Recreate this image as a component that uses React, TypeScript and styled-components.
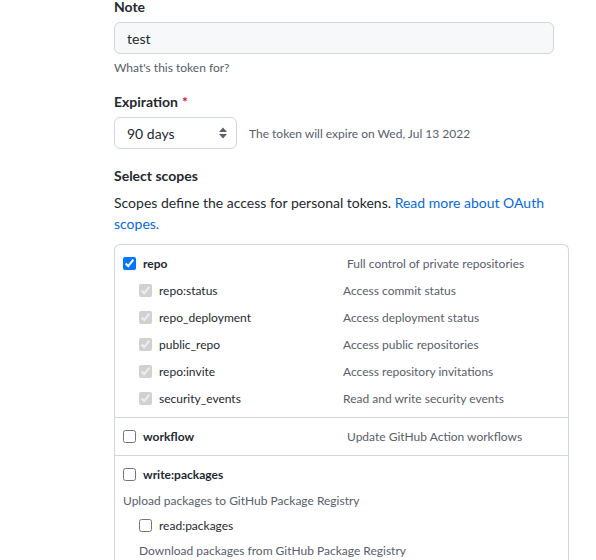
import React from "react";
import styled, { createGlobalStyle } from "styled-components";

const Global = createGlobalStyle`
  html, body { margin: 0; padding: 0; background: #fff; }
  body {
    font-family: Lato, "Noto Sans", sans-serif;
    color: #24292f;
    font-size: 14px;
  }
  * { box-sizing: border-box; }
`;

const Page = styled.div`
  padding-left: 114px;
  width: 569px;
  margin-top: -4px;
  display: flex;
  flex-direction: column;
`;

const Label = styled.label<{ $mt?: number }>`
  display: block;
  font-weight: 700;
  font-size: 14px;
  line-height: 21px;
  margin-top: ${(p) => p.$mt ?? 0}px;
`;

const Required = styled.span`
  color: #cf222e;
  margin-left: 4px;
`;

const TextInput = styled.input`
  margin-top: 5px;
  width: 440px;
  height: 32px;
  padding: 5px 12px;
  font: inherit;
  font-size: 14px;
  color: #24292f;
  background: #f6f8fa;
  border: 1px solid #d0d7de;
  border-radius: 6px;
  outline: none;
`;

const Hint = styled.p`
  margin: 5px 0 0;
  font-size: 12px;
  line-height: 18px;
  color: #57606a;
`;

const ExpRow = styled.div`
  margin-top: 5px;
  display: flex;
  align-items: center;
  gap: 12px;
`;

const SelectBox = styled.div`
  width: 123px;
  height: 32px;
  border: 1px solid #d0d7de;
  border-radius: 6px;
  background: #fff;
  display: flex;
  align-items: center;
  justify-content: space-between;
  padding: 0 8px 0 12px;
  font-size: 14px;
`;

const ExpNote = styled.span`
  font-size: 12px;
  color: #57606a;
`;

const Lead = styled.p`
  margin: 6px 0 0;
  font-size: 14px;
  line-height: 21px;
  width: 440px;
`;

const Link = styled.a`
  color: #0969da;
  text-decoration: none;
`;

const ScopeBox = styled.div`
  margin-top: 10px;
  width: 455px;
  border: 1px solid #d0d7de;
  border-radius: 6px;
  border-bottom: none;
  border-bottom-left-radius: 0;
  border-bottom-right-radius: 0;
`;

const Section = styled.div<{ $pt: number; $pb: number }>`
  padding: ${(p) => p.$pt}px 8px ${(p) => p.$pb}px 8px;
  & + & {
    border-top: 1px solid #d0d7de;
  }
`;

const Row = styled.div<{ $indent?: boolean; $h?: number }>`
  display: flex;
  align-items: center;
  height: ${(p) => p.$h ?? 27}px;
  padding-left: ${(p) => (p.$indent ? 16 : 0)}px;
`;

const Name = styled.label<{ $w: number; $bold?: boolean }>`
  display: flex;
  align-items: center;
  gap: 7px;
  width: ${(p) => p.$w}px;
  font-size: 12px;
  font-weight: ${(p) => (p.$bold ? 700 : 400)};
  color: #24292f;
`;

const Check = styled.input`
  margin: 0;
  width: 13px;
  height: 13px;
`;

const Desc = styled.span`
  font-size: 12px;
  color: #57606a;
`;

const SubDesc = styled.div<{ $indent?: boolean; $h: number }>`
  font-size: 12px;
  color: #57606a;
  line-height: ${(p) => p.$h}px;
  padding-left: ${(p) => (p.$indent ? 16 : 0)}px;
`;

const Arrows = () => (
  <svg width="10" height="14" viewBox="0 0 10 14">
    <path d="M5 1.5 L9 6 H1 Z" fill="#57606a" />
    <path d="M5 12.5 L9 8 H1 Z" fill="#57606a" />
  </svg>
);

const subs: [string, string][] = [
  ["repo:status", "Access commit status"],
  ["repo_deployment", "Access deployment status"],
  ["public_repo", "Access public repositories"],
  ["repo:invite", "Access repository invitations"],
  ["security_events", "Read and write security events"],
];

export default function App() {
  return (
    <>
      <Global />
      <Page>
        <Label>Note</Label>
        <TextInput defaultValue="test" />
        <Hint>What's this token for?</Hint>

        <Label $mt={14}>
          Expiration<Required>*</Required>
        </Label>
        <ExpRow>
          <SelectBox>
            <span>90 days</span>
            <Arrows />
          </SelectBox>
          <ExpNote>The token will expire on Wed, Jul 13 2022</ExpNote>
        </ExpRow>

        <Label $mt={16}>Select scopes</Label>
        <Lead>
          Scopes define the access for personal tokens.{" "}
          <Link href="#">Read more about OAuth scopes.</Link>
        </Lead>

        <ScopeBox>
          <Section $pt={5} $pb={5}>
            <Row>
              <Name $w={224} $bold>
                <Check type="checkbox" defaultChecked />
                repo
              </Name>
              <Desc>Full control of private repositories</Desc>
            </Row>
            {subs.map(([n, d]) => (
              <Row key={n} $indent>
                <Name $w={204}>
                  <Check type="checkbox" defaultChecked disabled />
                  {n}
                </Name>
                <Desc>{d}</Desc>
              </Row>
            ))}
          </Section>
          <Section $pt={5} $pb={5}>
            <Row>
              <Name $w={224} $bold>
                <Check type="checkbox" />
                workflow
              </Name>
              <Desc>Update GitHub Action workflows</Desc>
            </Row>
          </Section>
          <Section $pt={5} $pb={0}>
            <Row>
              <Name $w={224} $bold>
                <Check type="checkbox" />
                write:packages
              </Name>
            </Row>
            <SubDesc $h={26}>Upload packages to GitHub Package Registry</SubDesc>
            <Row $indent $h={23}>
              <Name $w={204}>
                <Check type="checkbox" />
                read:packages
              </Name>
            </Row>
            <SubDesc $indent $h={28}>
              Download packages from GitHub Package Registry
            </SubDesc>
          </Section>
        </ScopeBox>
      </Page>
    </>
  );
}
